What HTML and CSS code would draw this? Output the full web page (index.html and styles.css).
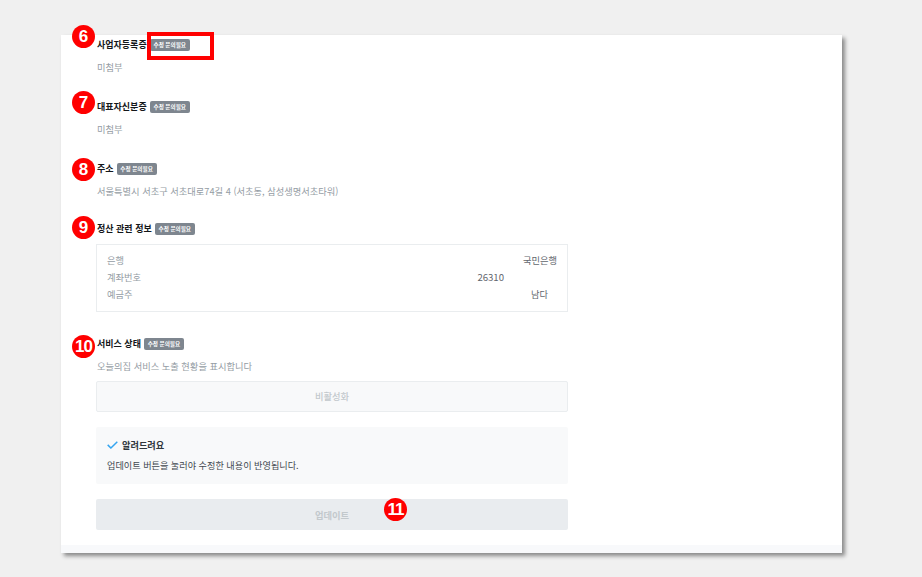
FILE: index.html
```html
<!DOCTYPE html>
<html lang="ko">
<head>
<meta charset="utf-8">
<title>서비스 정보</title>
<link rel="stylesheet" href="styles.css">
</head>
<body>
<main class="panel">
  <section class="field field-a">
    <div class="label-row"><h3 class="label">사업자등록증</h3><span class="badge">수정 문의필요</span></div>
    <p class="value">미첨부</p>
  </section>
  <section class="field field-a">
    <div class="label-row"><h3 class="label">대표자신분증</h3><span class="badge">수정 문의필요</span></div>
    <p class="value">미첨부</p>
  </section>
  <section class="field field-b">
    <div class="label-row"><h3 class="label">주소</h3><span class="badge">수정 문의필요</span></div>
    <p class="value">서울특별시 서초구 서초대로74길 4 (서초동, 삼성생명서초타워)</p>
  </section>
  <section class="field field-c">
    <div class="label-row"><h3 class="label">정산 관련 정보</h3><span class="badge">수정 문의필요</span></div>
    <dl class="info boxed">
      <div class="info-row"><dt>은행</dt><dd>국민은행</dd></div>
      <div class="info-row"><dt>계좌번호</dt><dd class="dd-account">26310</dd></div>
      <div class="info-row"><dt>예금주</dt><dd class="dd-holder">남다</dd></div>
    </dl>
  </section>
  <section class="field field-d">
    <div class="label-row"><h3 class="label">서비스 상태</h3><span class="badge">수정 문의필요</span></div>
    <p class="value">오늘의집 서비스 노출 현황을 표시합니다</p>
    <div class="status boxed">비활성화</div>
    <div class="notice boxed">
      <div class="notice-head">
        <svg class="check" viewBox="0 0 11 8" width="11" height="8" aria-hidden="true"><path d="M.7 3.9 3.9 7 10.3 .8" fill="none" stroke="#35a5f0" stroke-width="1.5"/></svg>
        <strong>알려드려요</strong>
      </div>
      <p class="notice-text">업데이트 버튼을 눌러야 수정한 내용이 반영됩니다.</p>
    </div>
    <button class="update boxed" type="button" disabled>업데이트</button>
  </section>

  <span class="marker m6">6</span>
  <span class="marker m7">7</span>
  <span class="marker m8">8</span>
  <span class="marker m9">9</span>
  <span class="marker m10">10</span>
  <span class="marker m11">11</span>
  <span class="highlight"></span>
</main>
</body>
</html>
```
FILE: styles.css
```css
* { box-sizing: border-box; }
html, body { margin: 0; height: 100%; }
body {
  background: #f0f0f0;
  padding: 35px 80px 24px 61px;
  font-family: "Noto Sans CJK KR", "Noto Sans", sans-serif;
  overflow: hidden;
}
.panel {
  position: relative;
  width: 781px;
  height: 518px;
  padding: 0 36px;
  background: linear-gradient(#fff 510px, #f8f9fb 510px);
  box-shadow: 3px 3px 4px #8a8a8a;
}
.field { width: 471px; }
.field-a { height: 62px; padding-top: 3px; }
.field-b { height: 60px; padding-top: 3px; }
.field-c { height: 118px; padding-top: 3px; }
.label-row {
  display: flex;
  align-items: center;
  gap: 3px;
  height: 14px;
}
.label {
  margin: 0;
  font-size: 9px;
  font-weight: 700;
  line-height: 14px;
  color: #14171a;
}
.badge {
  height: 12.5px;
  padding: 0 3.8px;
  border-radius: 2px;
  background: #7e868f;
  color: #fff;
  font-size: 5.6px;
  font-weight: 700;
  line-height: 12.5px;
  white-space: nowrap;
}
.value {
  margin: 8px 0 0;
  font-size: 9.25px;
  line-height: 14px;
  color: #949ca4;
}
.boxed {
  width: 472px;
  margin-left: -1px;
}
.info {
  margin-top: 8px;
  margin-bottom: 0;
  height: 68px;
  padding: 7px 10px 0;
  border: 1px solid #eaedef;
}
.info-row {
  display: flex;
  justify-content: space-between;
  height: 17px;
  font-size: 9.25px;
  line-height: 17px;
}
.info dt { color: #949ca4; }
.info dd { margin: 0; color: #5f666d; }
.info-row .dd-account { margin-right: 53px; font-size: 9.6px; }
.info-row .dd-holder { margin-right: 9px; }
.status {
  margin-top: 8px;
  height: 31px;
  border: 1px solid #eaedef;
  border-radius: 2px;
  background: #f8f9fa;
  color: #c2c8cc;
  font-size: 9.25px;
  font-weight: 500;
  line-height: 29px;
  text-align: center;
}
.notice {
  margin-top: 15px;
  height: 57px;
  padding: 9px 11px 0;
  border-radius: 2px;
  background: #f8f9fa;
}
.notice-head {
  display: flex;
  align-items: center;
  gap: 4px;
  height: 17px;
  font-size: 9.2px;
  color: #2f363c;
}
.notice-head strong { font-weight: 700; }
.notice-text {
  margin: 5px 0 0;
  font-size: 9.15px;
  line-height: 14px;
  color: #41484f;
}
.update {
  display: block;
  height: 31px;
  margin-top: 15px;
  padding: 0;
  border: 0;
  border-radius: 2px;
  background: #e9ecef;
  color: #c2c8cc;
  font: 700 9.3px "Noto Sans CJK KR", sans-serif;
}
.marker {
  position: absolute;
  width: 23px;
  height: 23px;
  border-radius: 50%;
  background: #f00;
  color: #fff;
  font: 700 17px/23px "Liberation Sans", sans-serif;
  text-align: center;
}
.m6 { left: 11px; top: -10px; }
.m7 { left: 11px; top: 56px; }
.m8 { left: 11px; top: 123px; }
.m9 { left: 11px; top: 181px; }
.m10 { left: 11px; top: 300px; letter-spacing: -1px; }
.m11 { left: 323px; top: 463px; letter-spacing: -1px; }
.highlight {
  position: absolute;
  left: 86px;
  top: -3px;
  width: 67px;
  height: 28px;
  border: 4px solid #f00;
}
```
